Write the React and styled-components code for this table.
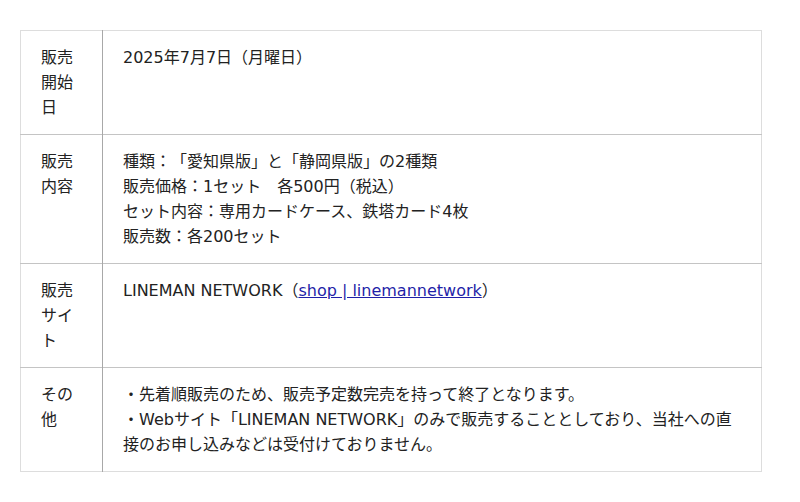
import React from 'react';
import styled, { createGlobalStyle } from 'styled-components';

const GlobalStyle = createGlobalStyle`
  body {
    margin: 0;
    background: #fff;
    font-family: "DejaVu Sans", "Noto Sans CJK JP", sans-serif;
    color: #222;
    text-spacing-trim: space-all;
  }
`;

const Page = styled.div`
  padding: 30px 0 0 20px;
`;

const Table = styled.table`
  width: 742px;
  border-collapse: collapse;
  border: 1px solid #ddd;
  font-size: 16px;
  line-height: 25px;
`;

const Row = styled.tr`
  border-bottom: 1px solid ${(p) => (p.last ? '#ddd' : '#c4c4c4')};
`;

const Label = styled.th`
  width: 41px;
  padding: 14px 20px 14px 20px;
  border-right: 1px solid #a8a8a8;
  text-align: left;
  vertical-align: top;
  font-weight: normal;
  word-break: break-all;
`;

const Cell = styled.td`
  padding: 14px 20px 14px 20px;
  vertical-align: top;
  word-break: break-all;
`;

const Line = styled.div``;

const Link = styled.a`
  color: #1f1fa8;
  text-decoration: underline;
`;

const rows = [
  { label: '販売開始日', lines: ['2025年7月7日（月曜日）'] },
  {
    label: '販売内容',
    lines: [
      '種類：「愛知県版」と「静岡県版」の2種類',
      '販売価格：1セット　各500円（税込）',
      'セット内容：専用カードケース、鉄塔カード4枚',
      '販売数：各200セット',
    ],
  },
  { label: '販売サイト', site: true },
  {
    label: 'その他',
    lines: [
      '・先着順販売のため、販売予定数完売を持って終了となります。',
      '・Webサイト「LINEMAN NETWORK」のみで販売することとしており、当社への直接のお申し込みなどは受付けておりません。',
    ],
  },
];

export default function App() {
  return (
    <Page>
      <GlobalStyle />
      <Table>
        <tbody>
          {rows.map((r, i) => (
            <Row key={r.label} last={i === rows.length - 1}>
              <Label>{r.label}</Label>
              <Cell>
                {r.site ? (
                  <Line>
                    LINEMAN NETWORK（<Link href="#">shop | linemannetwork</Link>）
                  </Line>
                ) : (
                  r.lines.map((l) => <Line key={l}>{l}</Line>)
                )}
              </Cell>
            </Row>
          ))}
        </tbody>
      </Table>
    </Page>
  );
}
